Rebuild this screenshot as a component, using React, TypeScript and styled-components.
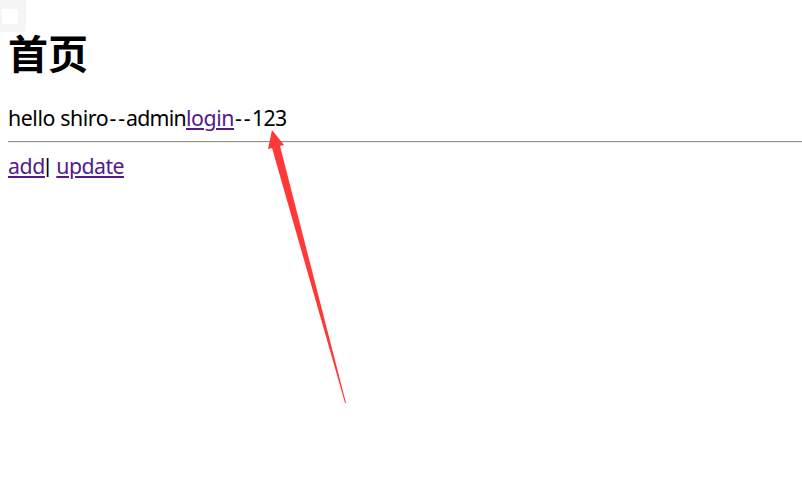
import React from 'react';
import styled, { createGlobalStyle } from 'styled-components';

const GlobalStyle = createGlobalStyle`
  body { margin: 0; background: #fff; color: #000; }
`;
const Page = styled.main`
  position: relative;
  height: 491px;
  padding: 25px 0 0 8px;
  box-sizing: border-box;
  overflow: hidden;
  font: 21.3px/30px "Noto Sans", "Noto Sans CJK SC", sans-serif;
`;
const CornerBadge = styled.div`
  position: absolute;
  top: 0;
  left: 0;
  width: 26px;
  height: 32px;
  border-bottom-right-radius: 3px;
  background: #f5f5f5;
`;
const BadgeMark = styled.div`
  width: 16px;
  height: 15px;
  margin: 9px 0 0 2px;
  border-radius: 2px;
  background: #fff;
`;
const Title = styled.h1`
  position: relative;
  margin: 0;
  height: 78px;
  font: 700 40px/54px "Noto Sans CJK SC", sans-serif;
`;
const Line = styled.div`
  display: flex;
  white-space: pre;
  height: 30px;
`;
const Run = styled.span<{ $width: number; $tracking?: number; $indent?: number }>`
  flex: none;
  box-sizing: border-box;
  width: ${(p) => p.$width}px;
  letter-spacing: ${(p) => p.$tracking ?? 0}px;
  text-indent: ${(p) => p.$indent ?? 0}px;
`;
const Link = styled(Run)`
  color: #551a8b;
  text-decoration: underline;
  text-decoration-thickness: 2px;
  text-underline-offset: 2px;
`;
const Divider = styled.span`
  width: 11.3px;
  font-family: "Liberation Sans", sans-serif;
  font-size: 20px;
`;
const Rule = styled.hr`
  height: 0;
  margin: 8px 0;
  border: 0;
  border-top: 1px solid #909090;
  border-bottom: 1px solid #eee;
`;
const Arrow = styled.svg`
  position: absolute;
  inset: 0;
  pointer-events: none;
`;

export default function App() {
  return (
    <Page>
      <GlobalStyle />
      <CornerBadge><BadgeMark /></CornerBadge>
      <Title>首页</Title>
      <Line>
        <Run $width={100.8} $tracking={-0.4}>hello shiro</Run>
        <Run $width={17.2} $tracking={1.7} $indent={0.8}>--</Run>
        <Run $width={60} $tracking={-0.75}>admin</Run>
        <Link as="a" href="#login" $width={48.3} $tracking={-0.4}>login</Link>
        <Run $width={17.7} $tracking={1.7} $indent={0.8}>--</Run>
        <Run $width={36} $tracking={-0.7}>123</Run>
      </Line>
      <Rule />
      <Line>
        <Link as="a" href="#add" $width={37} $tracking={-0.4}>add</Link>
        <Divider>| </Divider>
        <Link as="a" href="#update" $width={68} $tracking={-0.55}>update</Link>
      </Line>
      <Arrow width="802" height="491" viewBox="0 0 802 491">
        <path d="M272 130L284 145L280 146L346 403L345 403L272 148L268 149Z" fill="#ff3838" />
      </Arrow>
    </Page>
  );
}
